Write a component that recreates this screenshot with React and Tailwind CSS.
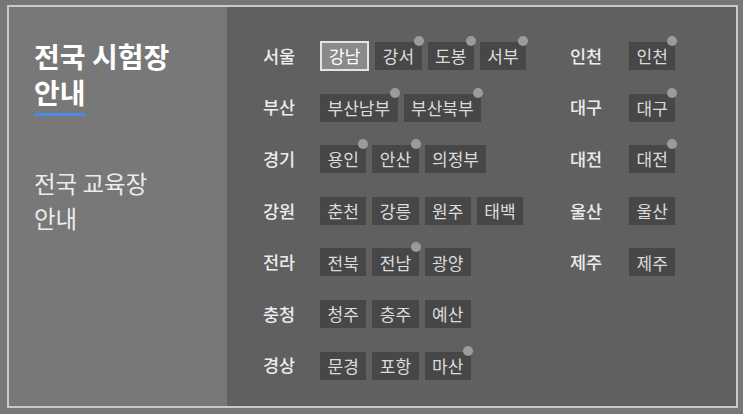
import React from "react";

const LEFT = [
  { name: "서울", tags: [["강남", false, true], ["강서", true], ["도봉", true], ["서부", true]] },
  { name: "부산", tags: [["부산남부", true], ["부산북부", true]] },
  { name: "경기", tags: [["용인", true], ["안산", true], ["의정부", false]] },
  { name: "강원", tags: [["춘천"], ["강릉"], ["원주"], ["태백"]] },
  { name: "전라", tags: [["전북"], ["전남", true], ["광양"]] },
  { name: "충청", tags: [["청주"], ["충주"], ["예산"]] },
  { name: "경상", tags: [["문경"], ["포항"], ["마산", true]] },
];

const RIGHT = [
  { name: "인천", tags: [["인천", true]] },
  { name: "대구", tags: [["대구", true]] },
  { name: "대전", tags: [["대전", true]] },
  { name: "울산", tags: [["울산"]] },
  { name: "제주", tags: [["제주"]] },
];

function Tag({ label, dot, selected }) {
  return (
    <div className="relative">
      {selected ? (
        <div className="flex h-[30px] items-center border-2 border-[#e4e4e4] bg-[#8a8a8a] px-[7px] text-[17px] text-white">
          {label}
        </div>
      ) : (
        <div className="flex h-[28px] items-center bg-[#474747] px-[7.5px] text-[17px] text-[#dcdcdc]">
          {label}
        </div>
      )}
      {dot && (
        <span className="absolute right-[-2px] top-[-6px] h-[10px] w-[10px] rounded-full bg-[#9b9b9b]" />
      )}
    </div>
  );
}

function Row({ region, labelW }) {
  return (
    <div className="flex h-[30px] items-center">
      <div className={labelW + " text-[17.5px] font-medium text-[#ececec]"}>{region.name}</div>
      <div className="flex items-center gap-[6px]">
        {region.tags.map(([l, d, s]) => (
          <Tag key={l} label={l} dot={d} selected={s} />
        ))}
      </div>
    </div>
  );
}

export default function App() {
  return (
    <div
      className="h-[414px] w-[743px] bg-[#777777] pl-[7px] pt-[5px]"
      style={{ fontFamily: '"Noto Sans CJK KR", "Noto Sans", sans-serif' }}
    >
      <div className="flex h-[403px] w-[731px] border-2 border-[#c6c9cd]">
        <div className="w-[218px] bg-[#787878] pl-[25px] pt-[31px]">
          <div className="text-[28px] font-bold leading-[36px] text-white">
            전국 시험장
            <br />
            <span className="inline-block border-b-[3px] border-[#4a8ae6] pb-[3px]">안내</span>
          </div>
          <div className="mt-[50px] text-[23.5px] leading-[35px] text-[#ececec]">
            전국 교육장
            <br />
            안내
          </div>
        </div>
        <div className="flex flex-1 bg-[#606060] pl-[36px] pt-[34px]">
          <div className="flex w-[307px] flex-col gap-[21.6px]">
            {LEFT.map((r) => (
              <Row key={r.name} region={r} labelW="w-[57px]" />
            ))}
          </div>
          <div className="flex flex-col gap-[21.6px]">
            {RIGHT.map((r) => (
              <Row key={r.name} region={r} labelW="w-[59px]" />
            ))}
          </div>
        </div>
      </div>
    </div>
  );
}
